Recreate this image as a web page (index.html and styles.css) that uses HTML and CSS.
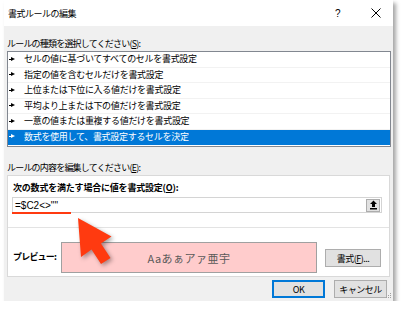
FILE: index.html
```html
<!DOCTYPE html>
<html lang="ja">
<head>
    <meta charset="UTF-8">
    <title>書式ルールの編集</title>
    <link rel="stylesheet" href="styles.css">
</head>
<body>
    <div class="dialog">
        <div class="titlebar">
            <span class="title">書式ルールの編集</span>
            <span class="help">?</span>
            <svg class="close" width="10" height="10" viewBox="0 0 10 10">
                <path d="M0.5 0.5 L9.5 9.5 M9.5 0.5 L0.5 9.5" stroke="#000" stroke-width="1"/>
            </svg>
        </div>

        <div class="content">
            <div class="label">ルールの種類を選択してください(<u>S</u>):</div>
            <div class="rule-list">
                <div class="rule"><span class="pointer"></span>セルの値に基づいてすべてのセルを書式設定</div>
                <div class="rule"><span class="pointer"></span>指定の値を含むセルだけを書式設定</div>
                <div class="rule"><span class="pointer"></span>上位または下位に入る値だけを書式設定</div>
                <div class="rule"><span class="pointer"></span>平均より上または下の値だけを書式設定</div>
                <div class="rule"><span class="pointer"></span>一意の値または重複する値だけを書式設定</div>
                <div class="rule selected"><span class="pointer"></span>数式を使用して、書式設定するセルを決定</div>
            </div>

            <div class="label label-edit">ルールの内容を編集してください(<u>E</u>):</div>
            <div class="panel">
                <div class="panel-top">
                    <div class="bold-label">次の数式を満たす場合に値を書式設定(<u>O</u>):</div>
                    <div class="formula">
                        <span class="formula-text">=$C2&lt;&gt;""</span>
                        <span class="collapse">
                            <svg width="9" height="10" viewBox="0 0 9 10">
                                <path d="M4.5 0.5 L8 4 L6 4 L6 7 L3 7 L3 4 L1 4 Z" fill="#000"/>
                                <rect x="1" y="8" width="7" height="1.5" fill="#000"/>
                            </svg>
                        </span>
                        <span class="mark"></span>
                    </div>
                </div>
                <div class="preview-row">
                    <span class="bold-label">プレビュー:</span>
                    <div class="preview">Aaあぁアァ亜宇</div>
                    <button class="btn format-btn">書式(<u>F</u>)...</button>
                </div>
            </div>

            <div class="actions">
                <button class="btn ok">OK</button>
                <button class="btn">キャンセル</button>
            </div>
        </div>
        <svg class="grip" width="6" height="6" viewBox="0 0 6 6">
            <rect x="4" y="0" width="1" height="1" fill="#a0a0a0"/>
            <rect x="2" y="2" width="1" height="1" fill="#a0a0a0"/>
            <rect x="4" y="2" width="1" height="1" fill="#a0a0a0"/>
            <rect x="0" y="4" width="1" height="1" fill="#a0a0a0"/>
            <rect x="2" y="4" width="1" height="1" fill="#a0a0a0"/>
            <rect x="4" y="4" width="1" height="1" fill="#a0a0a0"/>
        </svg>
    </div>

    <svg class="big-arrow" width="404" height="313" viewBox="0 0 404 313">
        <polygon points="78,218 111.5,236.5 101,243.5 110.5,258 101,264 91.5,249.5 81,257" fill="#ff3a10"/>
    </svg>
</body>
</html>
```

FILE: styles.css
```css
body {
    margin: 0;
    padding: 0;
    background-color: #ffffff;
    font-family: "Noto Sans CJK JP", "Noto Sans", sans-serif;
    font-size: 9px;
    color: #000000;
}
u {
    text-decoration: underline;
    text-underline-offset: 1px;
}
.dialog {
    position: relative;
    width: 389px;
    height: 301px;
    margin-left: 4px;
    background-color: #f0f0f0;
    box-shadow: 3px 3px 4px rgba(0, 0, 0, 0.35);
}
.titlebar {
    height: 26px;
    display: flex;
    align-items: center;
    background-color: #ffffff;
    padding-left: 4px;
}
.title {
    flex: 1;
    letter-spacing: -0.5px;
}
.help {
    width: 36px;
    font-family: "Liberation Sans", sans-serif;
    font-size: 10px;
}
.close {
    margin-right: 12px;
}
.content {
    padding: 10px 2px 0 3px;
}
.label {
    height: 15px;
    line-height: 15px;
    letter-spacing: -0.8px;
}
.label-edit {
    margin-top: 13px;
}
.rule-list {
    border: 1px solid #828790;
    background-color: #ffffff;
    padding-bottom: 1px;
}
.rule {
    box-sizing: border-box;
    height: 15.5px;
    line-height: 14px;
    display: flex;
    align-items: center;
    border-bottom: 1px solid #f2f2f2;
    letter-spacing: -0.3px;
}
.rule.selected {
    background-color: #0078d7;
    color: #ffffff;
    border-bottom-color: #0078d7;
}
.pointer {
    width: 8px;
    height: 5px;
    margin: 0 7px 0 1px;
    background: linear-gradient(#000, #000) left center / 3px 1px no-repeat;
    position: relative;
}
.pointer::after {
    content: "";
    position: absolute;
    left: 2px;
    top: 0;
    border-left: 4px solid #000;
    border-top: 2.5px solid transparent;
    border-bottom: 2.5px solid transparent;
}
.selected .pointer {
    background-image: linear-gradient(#fff, #fff);
}
.selected .pointer::after {
    border-left-color: #fff;
}
.panel {
    background-color: #ffffff;
    border: 1px solid #d9d9d9;
    margin-right: 1px;
}
.panel-top {
    height: 52px;
    border-bottom: 1px solid #e3e3e3;
    padding: 4px 7px 0 4px;
    box-sizing: border-box;
}
.bold-label {
    font-weight: bold;
    height: 15px;
    line-height: 15px;
    letter-spacing: -0.2px;
    padding-left: 1px;
}
.formula {
    position: relative;
    margin-top: 2px;
    height: 16px;
    box-sizing: border-box;
    border: 1px solid #d4d4d4;
    display: flex;
    align-items: center;
    justify-content: space-between;
}
.formula-text {
    font-family: "Liberation Sans", sans-serif;
    font-size: 10px;
    padding-left: 2px;
}
.collapse {
    width: 14px;
    height: 13px;
    box-sizing: border-box;
    border: 1px solid #adadad;
    background-color: #e1e1e1;
    display: flex;
    align-items: center;
    justify-content: center;
    margin-right: 1px;
}
.mark {
    position: absolute;
    left: -1px;
    bottom: -2px;
    width: 59px;
    height: 2px;
    background-color: #ff3a10;
}
.preview-row {
    height: 48px;
    display: flex;
    align-items: flex-end;
    padding: 0 8px 3px 4px;
    box-sizing: border-box;
}
.preview-row .bold-label {
    width: 48px;
    align-self: center;
    margin-top: 12px;
    letter-spacing: -0.8px;
}
.preview {
    width: 257px;
    height: 31px;
    box-sizing: border-box;
    border: 1px solid #a0a0a0;
    background-color: #ffcccc;
    color: #595959;
    font-size: 11px;
    letter-spacing: 0.5px;
    display: flex;
    align-items: center;
    justify-content: center;
}
.btn {
    height: 18px;
    padding: 0;
    border: 1px solid #adadad;
    background-color: #e1e1e1;
    font-family: "Noto Sans CJK JP", "Noto Sans", sans-serif;
    font-size: 9px;
    color: #000000;
    letter-spacing: -0.5px;
}
.format-btn {
    width: 56px;
    margin: 0 0 6px 8px;
}
.actions {
    display: flex;
    justify-content: flex-end;
    gap: 9px;
    padding: 3px 4px 0 0;
}
.actions .btn {
    width: 53px;
}
.btn.ok {
    border: 1px solid #0078d7;
    box-shadow: inset 0 0 0 1px #0078d7;
}
.grip {
    position: absolute;
    right: 1px;
    bottom: 2px;
}
.big-arrow {
    position: absolute;
    left: 0;
    top: 0;
    pointer-events: none;
    filter: drop-shadow(2px 2px 2px rgba(0, 0, 0, 0.35));
}
```
